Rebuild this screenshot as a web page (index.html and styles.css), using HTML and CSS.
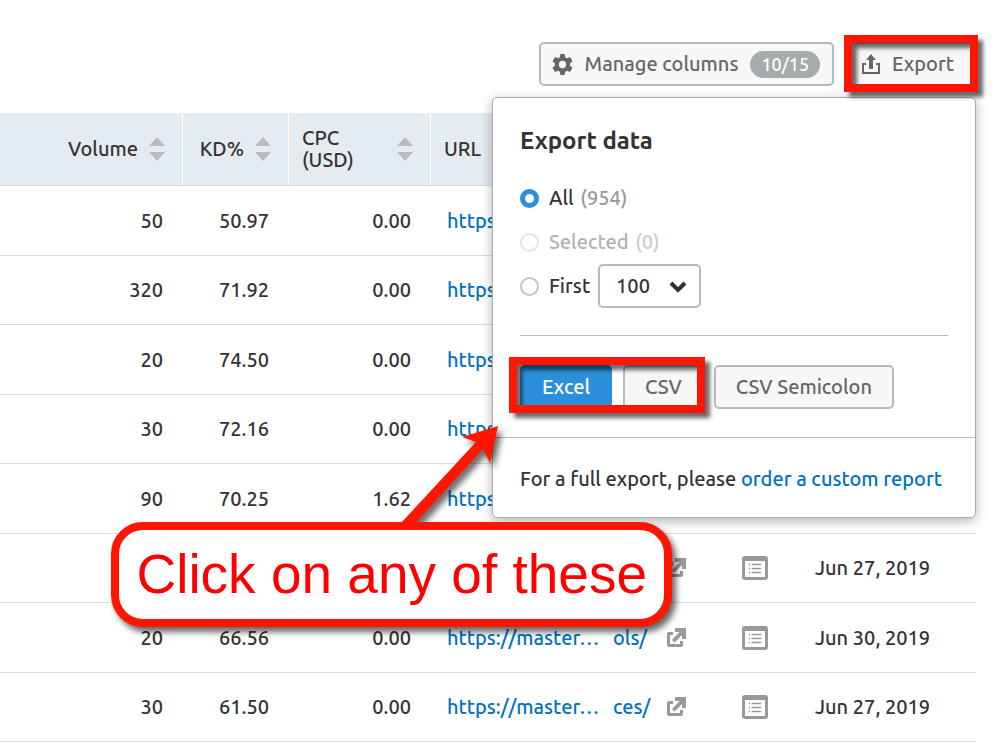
FILE: index.html
```html
<!DOCTYPE html>
<html lang="en">
<head>
  <meta charset="UTF-8" />
  <meta name="viewport" content="width=device-width, initial-scale=1" />
  <title>Keyword report - Export data</title>
  <link rel="stylesheet" href="styles.css">
</head>
<body>
  <svg class="sprite" aria-hidden="true">
    <symbol id="icon-sort" viewBox="0 0 16 24">
      <path d="M8 0l8 9H0zM0 15h16l-8 9z" />
    </symbol>
    <symbol id="icon-external" viewBox="0 0 20 20">
      <path d="M8 0h11v11h-4V7l-7.500 7.500-2.500-2.500L12.500 4H8z" />
      <path d="M2 4h4v3H3v9h10v-3h3v4a2 2 0 0 1-2 2H2a2 2 0 0 1-2-2V6a2 2 0 0 1 2-2z" />
    </symbol>
    <symbol id="icon-serp" viewBox="0 0 26 24">
      <path fill-rule="evenodd" d="M3 0h20a3 3 0 0 1 3 3v18a3 3 0 0 1-3 3H3a3 3 0 0 1-3-3V3a3 3 0 0 1 3-3zM3 5v16h20V5z" />
      <path d="M7 8h1v1H7zM10 8h9v1h-9zM7 12h1v1H7zM10 12h9v1h-9zM7 16h1v1H7zM10 16h9v1h-9z" stroke="#999" stroke-width=".5" />
    </symbol>
  </svg>

  <main class="report">
    <div class="toolbar">
      <button class="btn btn-columns" type="button">
        <svg class="icon-gear" viewBox="0 0 20 20" aria-hidden="true">
          <path fill-rule="evenodd" d="M8 0h4l.5 3 1.800 1 2.800-1.100 2.500 4-2.400 1.900v2.400l2.400 1.900-2.500 4-2.800-1.100-1.800 1L12 20H8l-.5-3-1.800-1-2.800 1.100-2.500-4 2.400-1.900V8.800L.400 6.900l2.500-4L5.700 4l1.800-1zM10 6.500a3.500 3.500 0 1 0 0 7 3.500 3.500 0 0 0 0-7z" />
        </svg>
        Manage columns
        <span class="badge">10/15</span>
      </button>

      <div class="export">
        <button class="btn btn-export" type="button">
          <svg class="icon-export" viewBox="0 0 18 20" aria-hidden="true">
            <path d="M9 0l5 6h-3v9H7V6H4z" />
            <path d="M0 9h4v2H2v7h14v-7h-2V9h4v11H0z" />
          </svg>
          Export
        </button>
        <span class="mark mark-export"></span>

        <form class="popover">
          <div class="popover-body">
            <h2>Export data</h2>
            <div class="option">
              <input type="radio" name="rows" id="rows-all" checked>
              <label for="rows-all">All <span class="count">(954)</span></label>
            </div>
            <div class="option disabled">
              <input type="radio" name="rows" id="rows-selected" disabled>
              <label for="rows-selected">Selected <span class="count">(0)</span></label>
            </div>
            <div class="option">
              <input type="radio" name="rows" id="rows-first">
              <label for="rows-first">First</label>
              <div class="select">
                <select aria-label="Number of rows">
                  <option>100</option>
                  <option>500</option>
                  <option>1000</option>
                </select>
                <svg viewBox="0 0 18 12" aria-hidden="true"><path d="M2 2l7 7 7-7" /></svg>
              </div>
            </div>
            <div class="formats">
              <div class="format-group">
                <button class="btn btn-primary" type="button">Excel</button>
                <button class="btn" type="button">CSV</button>
                <span class="mark mark-formats"></span>
              </div>
              <button class="btn" type="button">CSV Semicolon</button>
            </div>
          </div>
          <p class="popover-footer">For a full export, please <a href="#">order a custom report</a></p>
        </form>
      </div>
    </div>

    <table class="keywords">
      <colgroup>
        <col>
        <col class="col-kd">
        <col class="col-cpc">
        <col class="col-url">
        <col class="col-serp">
        <col class="col-date">
      </colgroup>
      <thead>
        <tr>
          <th><div class="head head-end">Volume <svg class="icon-sort"><use href="#icon-sort" /></svg></div></th>
          <th><div class="head head-end">KD% <svg class="icon-sort"><use href="#icon-sort" /></svg></div></th>
          <th><div class="head">CPC<br>(USD) <svg class="icon-sort"><use href="#icon-sort" /></svg></div></th>
          <th><div class="head">URL</div></th>
          <th></th>
          <th></th>
        </tr>
      </thead>
      <tbody>
        <tr>
          <td>50</td><td>50.97</td><td>0.00</td>
          <td class="url"><a href="#">https://</a></td><td></td><td></td>
        </tr>
        <tr>
          <td>320</td><td>71.92</td><td>0.00</td>
          <td class="url"><a href="#">https://</a></td><td></td><td></td>
        </tr>
        <tr>
          <td>20</td><td>74.50</td><td>0.00</td>
          <td class="url"><a href="#">https://</a></td><td></td><td></td>
        </tr>
        <tr>
          <td>30</td><td>72.16</td><td>0.00</td>
          <td class="url"><a href="#">https://</a></td><td></td><td></td>
        </tr>
        <tr>
          <td>90</td><td>70.25</td><td>1.62</td>
          <td class="url"><a href="#">https://</a></td><td></td><td></td>
        </tr>
        <tr>
          <td></td><td></td><td></td>
          <td class="url"><div class="link"><a href="#"></a><svg class="icon-external"><use href="#icon-external" /></svg></div></td>
          <td class="serp"><svg class="icon-serp"><use href="#icon-serp" /></svg></td>
          <td class="date">Jun 27, 2019</td>
        </tr>
        <tr>
          <td>20</td><td>66.56</td><td>0.00</td>
          <td class="url"><div class="link"><a href="#"><span>https://master…</span><span>ols/</span></a><svg class="icon-external"><use href="#icon-external" /></svg></div></td>
          <td class="serp"><svg class="icon-serp"><use href="#icon-serp" /></svg></td>
          <td class="date">Jun 30, 2019</td>
        </tr>
        <tr>
          <td>30</td><td>61.50</td><td>0.00</td>
          <td class="url"><div class="link"><a href="#"><span>https://master…</span><span>ces/</span></a><svg class="icon-external"><use href="#icon-external" /></svg></div></td>
          <td class="serp"><svg class="icon-serp"><use href="#icon-serp" /></svg></td>
          <td class="date">Jun 27, 2019</td>
        </tr>
      </tbody>
    </table>

    <div class="callout">
      <svg class="callout-arrow" viewBox="0 0 98 100" aria-hidden="true">
        <path d="M97 0L61 11l14 5L0 97v3h12l70-77 7 14z" />
      </svg>
      Click on any of these
    </div>
  </main>
</body>
</html>
```

FILE: styles.css
```css
* {
  box-sizing: border-box;
}

body {
  margin: 0;
  background: #fff;
  color: #333;
  font-family: Ubuntu, "Noto Sans", sans-serif;
  font-size: 20px;
  font-weight: 500;
  line-height: 22px;
}

a {
  color: #0071bc;
  text-decoration: none;
}

.sprite {
  position: absolute;
  width: 0;
  height: 0;
}

.report {
  position: relative;
  padding: 42px 24px 0 0;
}

/* toolbar */
.toolbar {
  display: flex;
  justify-content: flex-end;
  gap: 12px;
  margin-bottom: 27px;
}

.btn {
  height: 44px;
  padding: 0 20px;
  border: 2px solid #b5baba;
  border-radius: 5px;
  background: #f7f7f7;
  color: #666;
  font: inherit;
  white-space: nowrap;
  cursor: pointer;
}

.btn-columns,
.btn-export {
  display: flex;
  align-items: center;
  gap: 12px;
}

.btn-columns {
  padding: 0 12px 0 11px;
}

.btn-export {
  padding: 0 20px 0 14px;
}

.btn-primary {
  border-color: #2b8fdb;
  background: #2b8fdb;
  color: #fff;
}

.icon-gear {
  width: 21px;
  height: 21px;
  fill: #666;
}

.icon-export {
  width: 18px;
  height: 20px;
  fill: #666;
}

.badge {
  padding: 1px 11px;
  border-radius: 14px;
  background: #a6abab;
  color: #fff;
  font-size: 18px;
  line-height: 25px;
}

/* export popover */
.export {
  position: relative;
}

.popover {
  position: absolute;
  top: 55px;
  right: 0;
  z-index: 2;
  width: 484px;
  border: 1px solid #a9b0b0;
  border-radius: 5px;
  background: #fff;
  box-shadow: 0 3px 12px rgba(0, 0, 0, 0.3);
}

.popover-body {
  padding: 28px 27px;
}

.popover h2 {
  margin: 0 0 20px;
  font-size: 24px;
  line-height: 30px;
}

.option {
  display: flex;
  align-items: center;
  height: 44px;
}

.option input {
  appearance: none;
  width: 19px;
  height: 19px;
  margin: 0 10px 0 0;
  border: 2px solid #c4c7c7;
  border-radius: 50%;
  background: #fff;
}

.option input:checked {
  border: 5px solid #2b8fdb;
}

.option.disabled {
  color: #b0b3b3;
}

.option.disabled input {
  border-color: #e4e5e5;
}

.count {
  margin-left: 2px;
  color: #999;
}

.disabled .count {
  color: #ccc;
}

.select {
  position: relative;
  margin-left: 8px;
}

.select select {
  appearance: none;
  width: 103px;
  height: 44px;
  padding: 0 16px;
  border: 2px solid #b5baba;
  border-radius: 5px;
  background: #fff;
  color: #333;
  font: inherit;
}

.select svg {
  position: absolute;
  top: 17px;
  right: 14px;
  width: 18px;
  height: 12px;
  fill: none;
  stroke: #333;
  stroke-width: 4;
  pointer-events: none;
}

.formats {
  display: flex;
  gap: 10px;
  margin-top: 27px;
  padding-top: 29px;
  border-top: 1px solid #b9bdbd;
}

.format-group {
  position: relative;
  display: flex;
  gap: 11px;
}

.popover-footer {
  margin: 0;
  padding: 30px 27px 27px;
  border-top: 1px solid #b9bdbd;
  white-space: nowrap;
}

/* red marks */
.mark {
  position: absolute;
  z-index: 3;
  border: 8px solid #ff1500;
  filter: drop-shadow(5px 5px 2px rgba(0, 0, 0, 0.6));
  pointer-events: none;
}

.mark-export {
  inset: -7px -2px -6px;
}

.mark-formats {
  inset: -8px -1px -4px -11px;
}

.callout {
  position: absolute;
  top: 522px;
  right: 328px;
  z-index: 4;
  padding: 13px 17px 14px;
  border: 8px solid #ff1500;
  border-radius: 32px;
  background: #fff;
  color: #f00;
  font-family: "Liberation Sans", Arial, sans-serif;
  font-size: 55px;
  font-weight: normal;
  line-height: 62px;
  white-space: nowrap;
  filter: drop-shadow(4px 5px 3px rgba(0, 0, 0, 0.6));
}

.callout-arrow {
  position: absolute;
  top: -104px;
  right: 165px;
  width: 98px;
  height: 100px;
  fill: #ff1500;
}

/* keywords table */
.keywords {
  width: 100%;
  table-layout: fixed;
  border-collapse: separate;
  border-spacing: 0;
}

.col-kd {
  width: 106px;
}

.col-cpc {
  width: 142px;
}

.col-url {
  width: 290px;
}

.col-serp {
  width: 70px;
}

.col-date {
  width: 186px;
}

th {
  height: 73px;
  padding: 0 17px 0 13px;
  border-bottom: 1px solid #d6dadb;
  background: #e4ecf1;
  font-weight: 500;
  text-align: left;
}

th + th {
  border-left: 1px solid #fff;
}

.head {
  display: flex;
  align-items: center;
  justify-content: space-between;
}

.head-end {
  justify-content: flex-end;
  gap: 11px;
}

.icon-sort {
  flex: none;
  width: 16px;
  height: 24px;
  fill: #bbb;
}

td {
  height: 69px;
  padding: 0 19px;
  border-bottom: 1px solid #d9dcdd;
  text-align: right;
}

tr:nth-child(odd) td {
  height: 70px;
}

.url {
  padding: 0 0 0 17px;
  text-align: left;
}

.link {
  display: flex;
  align-items: center;
}

.link a {
  display: grid;
  grid-template-columns: 166px 54px;
}

.icon-external {
  width: 20px;
  height: 20px;
  fill: #999;
}

.serp {
  padding: 0;
  text-align: center;
}

.icon-serp {
  display: block;
  width: 26px;
  height: 24px;
  margin: 0 auto;
  fill: #999;
}

.date {
  padding: 0 0 0 25px;
  text-align: left;
}
```
